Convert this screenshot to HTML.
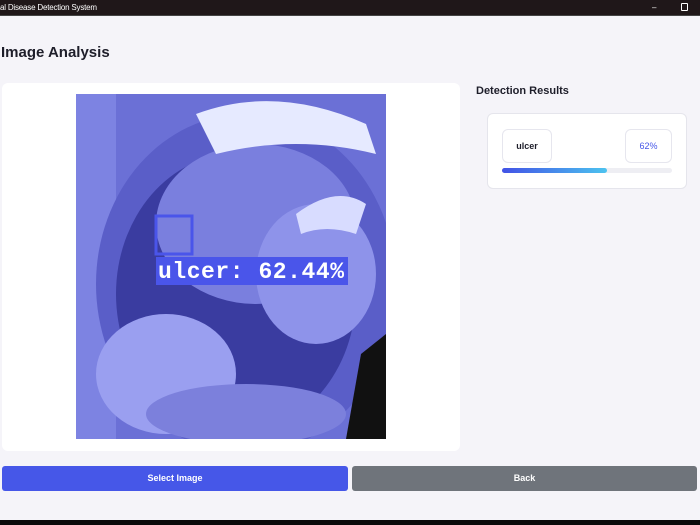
<!DOCTYPE html>
<html><head><style>
*{margin:0;padding:0;box-sizing:border-box}
body{width:700px;height:525px;background:#f5f4f9;font-family:"Liberation Sans",sans-serif;position:relative;overflow:hidden}
.tb{position:absolute;left:0;top:0;width:700px;height:16px;background:#1f1719;border-bottom:1px solid #444;color:#fff;font-size:8px;line-height:15px;letter-spacing:-0.2px}
.h1{position:absolute;left:1px;top:44px;font-size:15px;font-weight:bold;color:#1e1e2a}
.card{position:absolute;left:2px;top:83px;width:458px;height:368px;background:#fff;border-radius:6px}
.img{position:absolute;left:76px;top:94px;width:310px;height:345px}
.dr{position:absolute;left:476px;top:85px;font-size:11px;font-weight:bold;color:#1e1e2a}
.rc{position:absolute;left:487px;top:113px;width:200px;height:76px;background:#fff;border:1px solid #e5e5ec;border-radius:6px}
.b1{position:absolute;left:502px;top:129px;width:50px;height:34px;border:1px solid #e6e6ee;border-radius:6px;font-size:9px;font-weight:bold;text-align:center;line-height:32px;color:#1e1e2a}
.b2{position:absolute;left:625px;top:129px;width:47px;height:34px;border:1px solid #e6e6ee;border-radius:6px;font-size:9px;text-align:center;line-height:32px;color:#4657e8}
.bar{position:absolute;left:502px;top:168px;width:170px;height:5px;border-radius:3px;background:#eeeef3}
.bar i{display:block;width:105px;height:5px;border-radius:3px;background:linear-gradient(90deg,#4252e6,#4cc3ef)}
.btn{position:absolute;top:466px;height:25px;border-radius:3px;color:#fff;font-size:9px;font-weight:bold;text-align:center;line-height:25px}
.bot{position:absolute;left:0;top:520px;width:700px;height:5px;background:#0a0a0a}
</style></head><body>
<div class="tb">al Disease Detection System<span style="position:absolute;left:652px;top:0">–</span><span style="position:absolute;left:681px;top:3px;width:7px;height:8px;border:1.5px solid #fff;border-radius:1px"></span></div>
<div class="h1">Image Analysis</div>
<div class="card"></div>
<svg class="img" viewBox="0 0 310 345">
<rect width="310" height="345" fill="#6b70d6"/>
<rect x="0" y="0" width="40" height="345" fill="#7d83e2"/>
<ellipse cx="170" cy="190" rx="150" ry="170" fill="#5a5ec8"/>
<ellipse cx="160" cy="200" rx="120" ry="140" fill="#3a3ca0"/>
<ellipse cx="180" cy="130" rx="100" ry="80" fill="#7a7fde"/>
<path d="M120 20 Q200 -10 290 30 L300 60 Q220 40 140 60 Z" fill="#e6eaff"/>
<ellipse cx="240" cy="180" rx="60" ry="70" fill="#8e93ea"/>
<ellipse cx="90" cy="280" rx="70" ry="60" fill="#9a9ff0"/>
<ellipse cx="170" cy="320" rx="100" ry="30" fill="#7c80dc"/>
<path d="M285 260 L310 240 L310 345 L270 345 Z" fill="#111"/>
<path d="M220 120 Q260 90 290 110 L280 140 Q250 130 225 140 Z" fill="#d8dcff"/>
<rect x="80" y="122" width="36" height="38" fill="none" stroke="#4a55ea" stroke-width="3"/>
<rect x="80" y="163" width="192" height="28" fill="#4a55ea"/>
<text x="82" y="184" font-family="Liberation Mono,monospace" font-weight="bold" font-size="23" textLength="186" fill="#fff">ulcer: 62.44%</text>
</svg>
<div class="dr">Detection Results</div>
<div class="rc"></div>
<div class="b1">ulcer</div>
<div class="b2">62%</div>
<div class="bar"><i></i></div>
<div class="btn" style="left:2px;width:346px;background:#4657e8">Select Image</div>
<div class="btn" style="left:352px;width:345px;background:#6f747b">Back</div>
<div class="bot"></div>
</body></html>
